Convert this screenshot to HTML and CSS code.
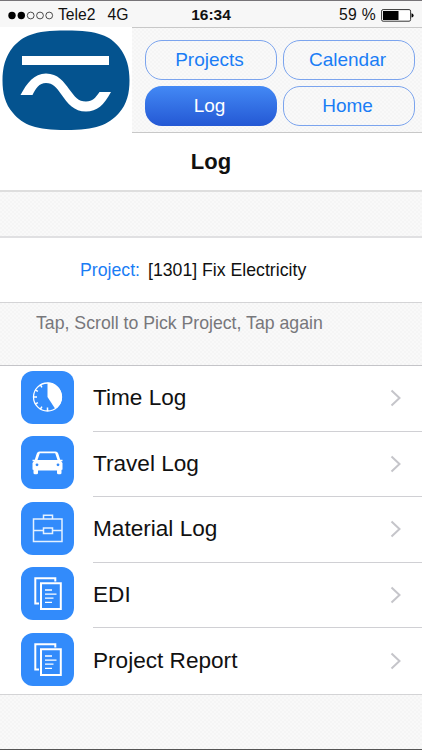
FILE: index.html
```html
<!DOCTYPE html>
<html lang="en">
<head>
    <meta charset="UTF-8">
    <meta name="viewport" content="width=device-width, initial-scale=1.0">
    <title>Log</title>
    <link rel="stylesheet" href="styles.css">
</head>
<body>
    <div class="screen">
        <div class="status-bar">
            <div class="carrier">
                <svg class="signal" width="46" height="9" viewBox="0 0 46 9">
                    <circle cx="4" cy="4.5" r="3.7"/>
                    <circle cx="13.3" cy="4.5" r="3.7"/>
                    <g fill="none" stroke="#222" stroke-width="0.8">
                        <circle cx="22.7" cy="4.5" r="3.4"/>
                        <circle cx="32" cy="4.5" r="3.4"/>
                        <circle cx="41.2" cy="4.5" r="3.4"/>
                    </g>
                </svg>
                <span class="operator">Tele2</span>
                <span>4G</span>
            </div>
            <div class="time">16:34</div>
            <div class="battery">
                <span>59 %</span>
                <svg width="33" height="13" viewBox="0 0 33 13">
                    <rect x="0.6" y="0.6" width="29" height="11.6" rx="1.5" fill="#fff" stroke="#333"/>
                    <rect x="2" y="2" width="15.5" height="9"/>
                    <path d="M30.5 4.2Q32.6 4.7 32.6 6.4T30.5 8.6Z"/>
                </svg>
            </div>
        </div>

        <div class="header">
            <div class="logo">
                <svg width="132" height="106" viewBox="0 0 132 106">
                    <path d="M66 3.5C99 3.5 110 9 119 20C127 30 129.5 41 129.5 53.5C129.5 66 127 77 119 86C108 98 96 103 66 103C36 103 23 98 13 86C5 77 2.5 66 2.5 53.5C2.5 41 5 30 13 20C23 9 33 3.5 66 3.5Z" fill="#04538f"/>
                    <rect x="22" y="29" width="87" height="9" fill="#fff"/>
                    <path d="M20.5 68C27 56 34 46.500 46 46.500C58 46.500 64 55 69 62C75 70 78 74.500 86 74.500C93 74.500 95 71 99.500 65H111C104 78 97 84.500 86 84.500C74 84.500 68 77 61 67C56 60 53 56 46 56C39 56 36 61 32.500 68Z" fill="#fff"/>
                </svg>
            </div>
            <div class="nav">
                <a class="nav-button">Projects</a>
                <a class="nav-button">Calendar</a>
                <a class="nav-button active">Log</a>
                <a class="nav-button">Home</a>
            </div>
        </div>

        <h1 class="page-title">Log</h1>

        <div class="project">
            <span class="project-label">Project:</span>
            <span>[1301] Fix Electricity</span>
        </div>
        <p class="hint">Tap, Scroll to Pick Project, Tap again</p>

        <div class="list">
            <div class="row">
                <div class="icon">
                    <svg width="53" height="53" viewBox="0 0 53 53">
                        <circle cx="26.500" cy="26" r="14" fill="none" stroke="#fff" stroke-width="1.300"/>
                        <path d="M26.500 26V11.500A14.500 14.500 0 0 1 36.300 36.700L34 37.500Z" fill="#fff"/>
                        <path d="M12 26H16M26.500 40V36.500M14.100 18.800L16.900 20.400M19.300 13.600L20.900 16.400M14.100 33.200L16.900 31.600M19.300 38.400L20.900 35.600" stroke="#fff" stroke-width="1.500"/>
                    </svg>
                </div>
                <div class="row-body">Time Log<svg class="chevron" width="12" height="18" viewBox="0 0 12 18"><path d="M1.500 1.500L9.500 9L1.500 16.500"/></svg></div>
            </div>
            <div class="row">
                <div class="icon">
                    <svg width="53" height="53" viewBox="0 0 53 53">
                        <path fill="#fff" fill-rule="evenodd" d="M18.500 15.500H34.500Q36.500 15.500 37.200 17.500L39.300 24L41.500 27V33.500L40.500 34V37Q40.500 38.300 39 38.300H37.500Q36 38.300 36 37V34.500H17V37Q17 38.300 15.500 38.300H14Q12.500 38.300 12.500 37V34L11.500 33.500V27L13.700 24L15.800 17.500Q16.500 15.500 18.500 15.500ZM18.800 17.300L16.500 24H36.500L34.200 17.300Z"/>
                        <path d="M11.500 24.500H14M39 24.500H41.500" stroke="#fff" stroke-width="1.500"/>
                        <circle cx="16" cy="28.800" r="1.400" fill="#328bfb"/>
                        <circle cx="37" cy="28.800" r="1.400" fill="#328bfb"/>
                    </svg>
                </div>
                <div class="row-body">Travel Log<svg class="chevron" width="12" height="18" viewBox="0 0 12 18"><path d="M1.500 1.500L9.500 9L1.500 16.500"/></svg></div>
            </div>
            <div class="row">
                <div class="icon">
                    <svg width="53" height="53" viewBox="0 0 53 53">
                        <path d="M12.500 17H41V39.500H12.500ZM22.500 17V13.200H31.500V17M12.500 28.500H22.500M31.500 28.500H41M22.500 26H31.500V31.500H22.500Z" fill="none" stroke="#e4f1ff" stroke-width="1.500"/>
                    </svg>
                </div>
                <div class="row-body">Material Log<svg class="chevron" width="12" height="18" viewBox="0 0 12 18"><path d="M1.500 1.500L9.500 9L1.500 16.500"/></svg></div>
            </div>
            <div class="row">
                <div class="icon">
                    <svg width="53" height="53" viewBox="0 0 53 53">
                        <path d="M18 36.500H14.300V11.200H34.300V14.500M20 16.300H39.800V42H20Z" fill="none" stroke="#fff" stroke-width="2"/>
                        <path d="M24 23H31M24 27.200H35.500M24 31.200H32.500M24 35.300H31" stroke="#fff" stroke-width="1.300"/>
                    </svg>
                </div>
                <div class="row-body">EDI<svg class="chevron" width="12" height="18" viewBox="0 0 12 18"><path d="M1.500 1.500L9.500 9L1.500 16.500"/></svg></div>
            </div>
            <div class="row">
                <div class="icon">
                    <svg width="53" height="53" viewBox="0 0 53 53">
                        <path d="M18 36.500H14.300V11.200H34.300V14.500M20 16.300H39.800V42H20Z" fill="none" stroke="#fff" stroke-width="2"/>
                        <path d="M24 23H31M24 27.200H35.500M24 31.200H32.500M24 35.300H31" stroke="#fff" stroke-width="1.300"/>
                    </svg>
                </div>
                <div class="row-body">Project Report<svg class="chevron" width="12" height="18" viewBox="0 0 12 18"><path d="M1.500 1.500L9.500 9L1.500 16.500"/></svg></div>
            </div>
        </div>
    </div>
</body>
</html>
```

FILE: styles.css
```css
* {
    margin: 0;
    padding: 0;
    box-sizing: border-box;
}

body {
    font-family: "Liberation Sans", Arial, sans-serif;
    color: #111;
}

svg {
    display: block;
}

.screen {
    height: 750px;
    overflow: hidden;
    border-top: 1px solid #777478;
    border-bottom: 1px solid #555;
    background: repeating-conic-gradient(#f5f5f5 0 25%, #f9f9f9 0 50%) 0 0 / 4px 4px;
}

/* status bar */
.status-bar {
    display: grid;
    grid-template-columns: 1fr auto 1fr;
    align-items: center;
    height: 26px;
    padding: 2px 8px 0;
    font-size: 15.7px;
    background-color: #f7f7f7;
}

.carrier, .battery {
    display: flex;
    align-items: center;
}

.operator {
    margin: 0 12px 0 4px;
}

.time {
    font-size: 15.5px;
    font-weight: bold;
}

.battery {
    justify-content: flex-end;
    gap: 5px;
    letter-spacing: 0.3px;
}

/* header */
.header {
    display: flex;
    height: 106px;
}

.logo {
    width: 132px;
    background-color: white;
}

.nav {
    flex: 1;
    display: grid;
    grid-template-columns: 132px 132px;
    grid-template-rows: 40px 40px;
    gap: 6px;
    padding: 12px 0 0 13px;
    border-top: 1px solid #c8c8c8;
    border-bottom: 1px solid #c8c8c8;
}

.nav-button {
    display: flex;
    align-items: center;
    justify-content: center;
    padding-right: 3px;
    border: 1px solid #7ba4ee;
    border-radius: 17px;
    color: #1a7df5;
    font-size: 19px;
}

.nav-button.active {
    border: none;
    color: white;
    background: linear-gradient(#4389f5, #2458d4);
}

.page-title {
    height: 59px;
    padding-top: 1px;
    background-color: white;
    border-bottom: 2px solid #dedede;
    font-size: 22px;
    line-height: 56px;
    text-align: center;
}

/* project picker */
.project {
    display: flex;
    align-items: center;
    gap: 8px;
    height: 67px;
    margin-top: 44px;
    padding-left: 80px;
    background-color: white;
    border-top: 2px solid #e0e0e2;
    border-bottom: 1px solid #d4d4d6;
    font-size: 17.7px;
}

.project-label {
    color: #1a7df5;
}

.hint {
    height: 62px;
    padding: 10px 0 0 36px;
    color: #77777b;
    font-size: 17.7px;
    line-height: 21px;
}

/* log list */
.list {
    background-color: white;
    border-top: 1px solid #c4c4c8;
    border-bottom: 1px solid #d4d4d6;
}

.row {
    display: flex;
    height: 65.6px;
    padding-left: 21px;
}

.icon {
    width: 53px;
    height: 53px;
    margin: 4.5px 19px 0 0;
    border-radius: 12px;
    background-color: #328bfb;
}

.row-body {
    flex: 1;
    display: flex;
    align-items: center;
    justify-content: space-between;
    padding-right: 20px;
    border-bottom: 1px solid #d0d0d4;
    font-size: 22.6px;
}

.row:last-child .row-body {
    border-bottom: none;
}

.chevron path {
    fill: none;
    stroke: #c5c5ca;
    stroke-width: 2;
}
```
